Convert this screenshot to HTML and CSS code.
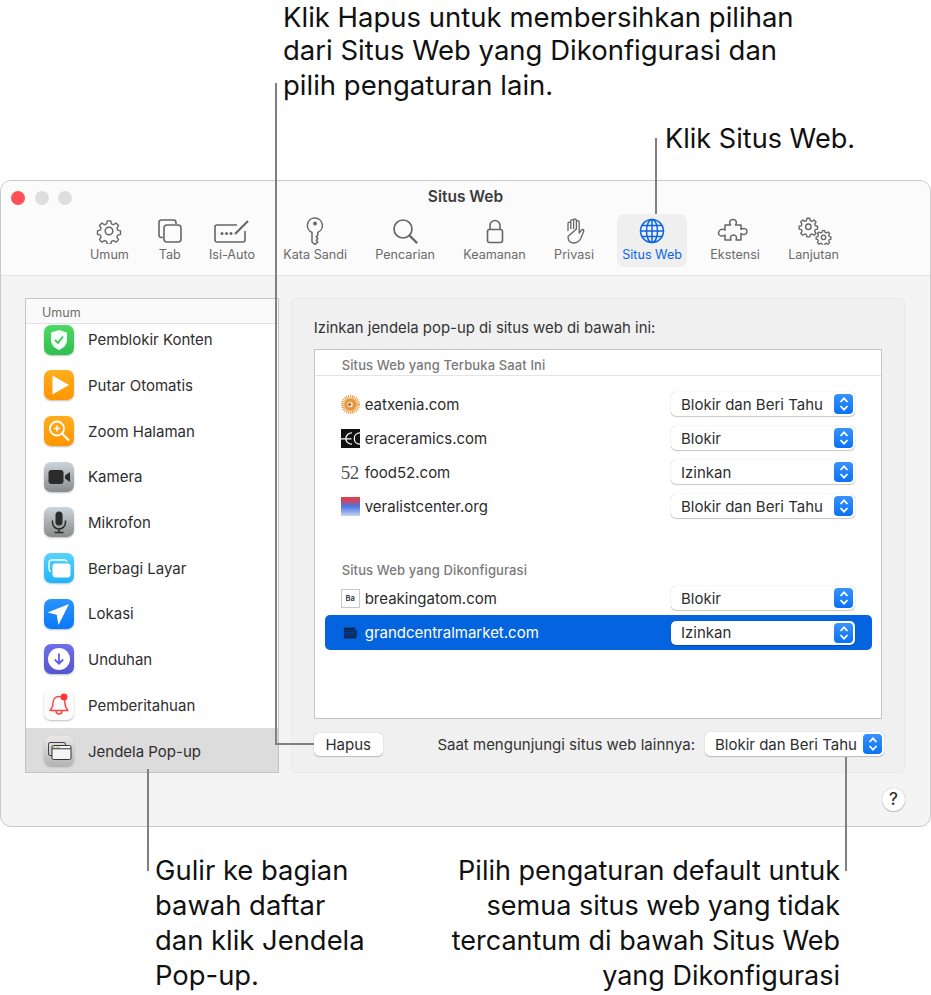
FILE: index.html
```html
<!DOCTYPE html>
<html lang="id">
<head>
<meta charset="utf-8">
<title>Situs Web</title>
<link rel="stylesheet" href="styles.css">
</head>
<body>
<div class="page">
  <header class="top">
    <p class="callout callout-hapus"><span>Klik Hapus untuk membersihkan pilihan</span><span>dari Situs Web yang Dikonfigurasi dan</span><span>pilih pengaturan lain.</span></p>
    <p class="callout callout-situs">Klik Situs Web.</p>
  </header>

  <main class="window">
    <div class="titlebar">
      <div class="lights"><span class="light red"></span><span class="light"></span><span class="light"></span></div>
      <div class="title">Situs Web</div>
    </div>
    <nav class="toolbar">
      <div class="tool">
        <svg viewBox="0 0 26 26" class="ticon"><g fill="none" stroke="#666" stroke-width="1.5" stroke-linejoin="round"><path d="M11 1.8h4l.7 3.2 2.3 1 2.8-1.8 2.8 2.8-1.8 2.8 1 2.3 3 .7v4l-3 .7-1 2.3 1.8 2.8-2.8 2.8-2.8-1.8-2.3 1-.7 3h-4l-.7-3-2.3-1-2.8 1.8-2.8-2.8 1.8-2.8-1-2.3-3-.7v-4l3-.7 1-2.3-1.8-2.8 2.8-2.8 2.8 1.8 2.3-1z" transform="translate(1.3 1.3) scale(.9)"/><circle cx="13" cy="13" r="3.8"/></g></svg>
        <span>Umum</span>
      </div>
      <div class="tool tool-tab">
        <svg viewBox="0 0 26 26" class="ticon"><g fill="none" stroke="#666" stroke-width="1.6"><path d="M6 19.5H4.5a2.5 2.5 0 0 1-2.5-2.500V4.500A2.500 2.500 0 0 1 4.500 2h12A2.500 2.500 0 0 1 19 4.500V6"/><rect x="7" y="7" width="17" height="17" rx="3"/></g></svg>
        <span>Tab</span>
      </div>
      <div class="tool">
        <svg viewBox="0 0 36 26" class="ticon wide"><g fill="none" stroke="#666" stroke-width="1.6"><path d="M23 7H3a2 2 0 0 0-2 2v13a2 2 0 0 0 2 2h26a2 2 0 0 0 2-2V13"/><path d="M21 16 34 3" stroke-width="2.200"/></g><g fill="#666"><circle cx="8" cy="15.500" r="1.500"/><circle cx="12.500" cy="15.500" r="1.500"/><circle cx="17" cy="15.500" r="1.500"/></g></svg>
        <span>Isi-Auto</span>
      </div>
      <div class="tool">
        <svg viewBox="0 0 26 28" class="ticon tall"><path d="M13 1a7.500 7.500 0 0 0-3 14.400V25l3 2.500 2.800-2.500-1.500-1.800 1.500-1.700-1.500-1.800 1.500-1.700v-2.600A7.500 7.500 0 0 0 13 1z" fill="none" stroke="#666" stroke-width="1.500" stroke-linejoin="round"/><circle cx="13" cy="6.500" r="1.900" fill="#666"/></svg>
        <span>Kata Sandi</span>
      </div>
      <div class="tool">
        <svg viewBox="0 0 26 26" class="ticon"><circle cx="11" cy="11" r="9" fill="none" stroke="#666" stroke-width="1.700"/><path d="m17.500 17.500 7 7" stroke="#666" stroke-width="2.400" stroke-linecap="round"/></svg>
        <span>Pencarian</span>
      </div>
      <div class="tool">
        <svg viewBox="0 0 26 26" class="ticon"><g fill="none" stroke="#666" stroke-width="1.600"><rect x="5.500" y="11.500" width="15" height="13" rx="2"/><path d="M8 11.500V7.500a5 5 0 0 1 10 0v4"/></g></svg>
        <span>Keamanan</span>
      </div>
      <div class="tool">
        <svg viewBox="0 0 26 26" class="ticon"><path d="M7 13V5.500a1.400 1.400 0 0 1 2.800 0V11m0 0V3a1.400 1.400 0 0 1 2.800 0v8m0 0V2.400a1.400 1.400 0 0 1 2.800 0V11m0 0V4a1.400 1.400 0 0 1 2.800 0v11l2.200-2.800c1.200-1.500 3-.3 2.200 1.200L20 20c-1.500 3-3.500 5-7 5-4 0-6-2.500-6-6.500z" fill="none" stroke="#666" stroke-width="1.300" stroke-linejoin="round"/></svg>
        <span>Privasi</span>
      </div>
      <div class="tool active">
        <svg viewBox="0 0 26 26" class="ticon"><g fill="none" stroke="#0a64e4" stroke-width="1.500"><circle cx="13" cy="13" r="11.500"/><ellipse cx="13" cy="13" rx="5.500" ry="11.500"/><path d="M13 1.500v23M1.500 13h23M3 7.500h20M3 18.500h20"/></g></svg>
        <span>Situs Web</span>
      </div>
      <div class="tool">
        <svg viewBox="0 0 36 26" class="ticon wide"><path d="M8 7h5.500c-2-3-.5-5.500 2.500-5.500S20.500 4 18.500 7H24v4.500c2.500-2 6-1 6 2s-3.500 4-6 2V22h-5c1.500-3.500-.5-5-2.500-5s-4 1.500-2.500 5H8v-5c-3 2-6.500 1-6.500-2S5 10 8 12z" fill="none" stroke="#666" stroke-width="1.500" stroke-linejoin="round"/></svg>
        <span>Ekstensi</span>
      </div>
      <div class="tool">
        <svg viewBox="0 0 36 28" class="ticon wide tall"><g fill="none" stroke="#666" stroke-linejoin="round"><g transform="translate(3 0) scale(.72)" stroke-width="1.900"><path d="M11 1.8h4l.7 3.2 2.3 1 2.8-1.800 2.800 2.800-1.800 2.800 1 2.300 3 .7v4l-3 .7-1 2.300 1.800 2.800-2.800 2.800-2.800-1.800-2.300 1-.7 3h-4l-.7-3-2.300-1-2.800 1.800-2.800-2.800 1.800-2.800-1-2.300-3-.7v-4l3-.7 1-2.300-1.800-2.800 2.800-2.800 2.800 1.800 2.300-1z"/><circle cx="13" cy="13.500" r="3.800"/></g><g transform="translate(20 12.500) scale(.58)" stroke-width="2.200"><path d="M11 1.8h4l.7 3.2 2.300 1 2.800-1.800 2.800 2.800-1.800 2.800 1 2.300 3 .7v4l-3 .7-1 2.300 1.800 2.800-2.800 2.800-2.800-1.800-2.300 1-.7 3h-4l-.7-3-2.300-1-2.800 1.800-2.800-2.800 1.800-2.800-1-2.300-3-.7v-4l3-.7 1-2.300-1.800-2.800 2.800-2.800 2.800 1.800 2.300-1z"/><circle cx="13" cy="13.500" r="3.800"/></g></g></svg>
        <span>Lanjutan</span>
      </div>
    </nav>

    <div class="content">
      <aside class="sidebar">
        <div class="side-head">Umum</div>
        <ul class="side-list">
          <li class="side-row first"><span class="app green"><svg viewBox="0 0 30 30"><path d="M15 5l8 2.500V15c0 5-3.500 8-8 10-4.500-2-8-5-8-10V7.500z" fill="#fff" opacity=".95"/><path d="m11 15 3 3 5-6.500" fill="none" stroke="#34c759" stroke-width="1.800"/></svg></span>Pemblokir Konten</li>
          <li class="side-row"><span class="app orange"><svg viewBox="0 0 30 30"><path d="M8.500 5.500 25 15 8.500 24.500z" fill="#fff"/></svg></span>Putar Otomatis</li>
          <li class="side-row"><span class="app orange"><svg viewBox="0 0 30 30"><g fill="none" stroke="#fff" stroke-width="1.800"><circle cx="13" cy="12.500" r="7"/><path d="m18 17.500 7 7" stroke-width="2.200"/><path d="M13 9.500v6M10 12.500h6" stroke-width="1.500"/></g></svg></span>Zoom Halaman</li>
          <li class="side-row"><span class="app grey"><svg viewBox="0 0 30 30"><rect x="4.500" y="8" width="15" height="14" rx="3" fill="#2b2b2b"/><path d="m21 13.500 5-3.500v10l-5-3.500z" fill="#2b2b2b"/></svg></span>Kamera</li>
          <li class="side-row"><span class="app grey"><svg viewBox="0 0 30 30"><rect x="11.500" y="4.500" width="7" height="14" rx="3.500" fill="#2b2b2b"/><path d="M8.500 13.500v2a6.500 6.500 0 0 0 13 0v-2M15 22v3.500M10.500 25.500h9" fill="none" stroke="#2b2b2b" stroke-width="1.500"/></svg></span>Mikrofon</li>
          <li class="side-row"><span class="app cyan"><svg viewBox="0 0 30 30"><path d="M7 18.500a2.500 2.500 0 0 1-2-2.500V9.500A2.500 2.500 0 0 1 7.500 7h13A2.500 2.500 0 0 1 23 9" fill="none" stroke="#fff" stroke-width="1.400"/><rect x="8.500" y="10.500" width="18" height="14" rx="3" fill="#fff"/></svg></span>Berbagi Layar</li>
          <li class="side-row"><span class="app blue"><svg viewBox="0 0 30 30"><path d="M25 5 14.500 26l-1.800-10.200L3.500 13.500z" fill="#fff"/></svg></span>Lokasi</li>
          <li class="side-row"><span class="app indigo"><svg viewBox="0 0 30 30"><circle cx="15" cy="15" r="11" fill="#fff"/><path d="M15 9.500v10M10.800 15.500l4.200 4.200 4.200-4.200" fill="none" stroke="#5c5ce0" stroke-width="1.800"/></svg></span>Unduhan</li>
          <li class="side-row"><span class="app white"><svg viewBox="0 0 30 30"><path d="M15 6.500c-4 0-6 3-6 6.500 0 4-1 5.500-3 7.500h18c-2-2-3-3.500-3-7.500 0-3.500-2-6.500-6-6.500zM12 21c0 4 6 4 6 0" fill="none" stroke="#f44" stroke-width="1.500" stroke-linejoin="round"/><circle cx="20" cy="7" r="3.500" fill="#f33"/></svg></span>Pemberitahuan</li>
          <li class="side-row selected"><span class="app silver"><svg viewBox="0 0 30 30"><rect x="4.500" y="6.500" width="17" height="13" rx="1.500" fill="none" stroke="#444" stroke-width="1"/><rect x="8" y="9.500" width="19" height="14" rx="1.500" fill="#f4f4f4" stroke="#333" stroke-width="1"/><path d="M8 12.800h19" stroke="#333" stroke-width="1"/><circle cx="10" cy="11.200" r=".7" fill="#e44"/><circle cx="12.200" cy="11.200" r=".7" fill="#ca3"/><circle cx="14.400" cy="11.200" r=".7" fill="#4a4"/></svg></span>Jendela Pop-up</li>
        </ul>
      </aside>

      <section class="panel">
        <p class="panel-title">Izinkan jendela pop-up di situs web di bawah ini:</p>
        <div class="table">
          <div class="table-head">Situs Web yang Terbuka Saat Ini</div>
          <div class="rows">
            <div class="row">
              <span class="fav"><svg viewBox="0 0 20 20"><circle cx="10" cy="10" r="8.200" fill="none" stroke="#e8963a" stroke-width="3.400" stroke-dasharray="1.100 .9"/><circle cx="10" cy="10" r="6.600" fill="#e8973c"/><circle cx="9.500" cy="10" r="3" fill="#f6e2c6"/><circle cx="9" cy="10" r="1.400" fill="#8a4a20"/></svg></span>
              <span class="host">eatxenia.com</span>
              <div class="select"><span>Blokir dan Beri Tahu</span><i class="stepper"><svg viewBox="0 0 10 16"><path d="m1.500 6 3.500-3.700L8.500 6M1.500 10 5 13.700 8.500 10" fill="none" stroke="#fff" stroke-width="1.700"/></svg></i></div>
            </div>
            <div class="row">
              <span class="fav"><svg viewBox="0 0 20 20"><rect width="20" height="20" fill="#111"/><path d="M0 10.500h4.500M11.500 4A6.500 6.500 0 0 0 5 10c0 3 2.500 6 6.500 6M5 10.500h6M20 4c-4 0-6 3-6 6s2 6 6 6" fill="none" stroke="#fff" stroke-width="1.300"/></svg></span>
              <span class="host">eraceramics.com</span>
              <div class="select"><span>Blokir</span><i class="stepper"><svg viewBox="0 0 10 16"><path d="m1.500 6 3.500-3.700L8.500 6M1.500 10 5 13.700 8.500 10" fill="none" stroke="#fff" stroke-width="1.700"/></svg></i></div>
            </div>
            <div class="row">
              <span class="fav fav-text">52</span>
              <span class="host">food52.com</span>
              <div class="select"><span>Izinkan</span><i class="stepper"><svg viewBox="0 0 10 16"><path d="m1.500 6 3.500-3.700L8.500 6M1.500 10 5 13.700 8.500 10" fill="none" stroke="#fff" stroke-width="1.700"/></svg></i></div>
            </div>
            <div class="row">
              <span class="fav fav-gradient"></span>
              <span class="host">veralistcenter.org</span>
              <div class="select"><span>Blokir dan Beri Tahu</span><i class="stepper"><svg viewBox="0 0 10 16"><path d="m1.500 6 3.500-3.700L8.500 6M1.500 10 5 13.700 8.500 10" fill="none" stroke="#fff" stroke-width="1.700"/></svg></i></div>
            </div>
          </div>
          <div class="table-head plain">Situs Web yang Dikonfigurasi</div>
          <div class="rows rows-config">
            <div class="row">
              <span class="fav fav-ba">Ba</span>
              <span class="host">breakingatom.com</span>
              <div class="select"><span>Blokir</span><i class="stepper"><svg viewBox="0 0 10 16"><path d="m1.500 6 3.500-3.700L8.500 6M1.500 10 5 13.700 8.500 10" fill="none" stroke="#fff" stroke-width="1.700"/></svg></i></div>
            </div>
            <div class="row current">
              <span class="fav"><svg viewBox="0 0 20 20"><path d="M3 6h12M3 9h14M3 12h14M3 15h13" stroke="#0a2a5c" stroke-width="2.600"/></svg></span>
              <span class="host">grandcentralmarket.com</span>
              <div class="select"><span>Izinkan</span><i class="stepper"><svg viewBox="0 0 10 16"><path d="m1.500 6 3.500-3.700L8.500 6M1.500 10 5 13.700 8.500 10" fill="none" stroke="#fff" stroke-width="1.700"/></svg></i></div>
            </div>
          </div>
        </div>
        <div class="panel-foot">
          <button class="btn" type="button">Hapus</button>
          <span class="foot-label">Saat mengunjungi situs web lainnya:</span>
          <div class="select select-foot"><span>Blokir dan Beri Tahu</span><i class="stepper"><svg viewBox="0 0 10 16"><path d="m1.500 6 3.500-3.700L8.500 6M1.500 10 5 13.700 8.500 10" fill="none" stroke="#fff" stroke-width="1.700"/></svg></i></div>
        </div>
      </section>
    </div>
    <div class="help-row"><span class="help">?</span></div>
  </main>

  <footer class="bottom">
    <p class="callout callout-gulir">Gulir ke bagian<br>bawah daftar<br>dan klik Jendela<br>Pop-up.</p>
    <p class="callout callout-pilih">Pilih pengaturan default untuk<br>semua situs web yang tidak<br>tercantum di bawah Situs Web<br>yang Dikonfigurasi</p>
  </footer>

  <span class="line l-hapus"></span>
  <span class="line l-hapus-h"></span>
  <span class="line l-situs"></span>
  <span class="line l-gulir"></span>
  <span class="line l-pilih"></span>
</div>
</body>
</html>
```
FILE: styles.css
```css
* { box-sizing: border-box; }
html, body { margin: 0; background: #fff; }
body { font-family: Inter, "Liberation Sans", sans-serif; color: #2c2c2c; }
.page { position: relative; width: 931px; height: 995px; overflow: hidden; }
p { margin: 0; }

.top { height: 180px; }
.callout { font-size: 27.400px; line-height: 35px; color: #111; }
.callout-hapus { display: flex; flex-direction: column; margin-left: 283px; font-size: 27.500px; line-height: 30px; }
.callout-hapus span:nth-child(1) { line-height: 34px; margin-bottom: 1px; }
.callout-hapus span:nth-child(2) { margin-bottom: 5px; }
.callout-situs { margin-left: 665px; margin-top: 21px; font-size: 27.100px; }

.window {
  width: 931px; height: 647px; background: #f4f4f4;
  border: 1px solid #c9c9c9; border-radius: 11px; overflow: hidden;
}
.titlebar { position: relative; height: 32px; background: #fbfbfb; }
.lights { display: flex; gap: 9.500px; padding: 10px 0 0 10px; }
.light { width: 14px; height: 14px; border-radius: 50%; background: #dedede; }
.light.red { background: #ff5257; }
.title { position: absolute; left: 0; right: 0; top: 6px; text-align: center; font-size: 15.500px; line-height: 20px; font-weight: 600; color: #3c3c3c; }

.toolbar {
  display: flex; gap: 19.300px; height: 63px; padding: 1px 0 0 84.500px;
  background: #fbfbfb; border-bottom: 1px solid #e4e4e4;
}
.tool {
  display: flex; flex-direction: column; align-items: center; height: 53px;
  padding: 4px 4.500px 0; border-radius: 7px; font-size: 12.600px; color: #6a6a6a; white-space: nowrap;
}
.tool-tab { padding-left: 4px; padding-right: 2.400px; }
.tool span { margin-top: 3px; line-height: 16px; }
.ticon { width: 26px; height: 26px; display: block; }
.ticon.wide { width: 36px; }
.ticon.tall { height: 28px; margin: -1px 0; }
.tool.active { background: #efefef; color: #0a64e4; padding-left: 5.500px; padding-right: 5.500px; margin: 0 -1px; }

.content { display: flex; gap: 12px; padding: 22px 25px 0 24px; }
.sidebar { width: 254px; height: 475px; background: #fff; border: 1px solid #c4c4c4; overflow: hidden; display: flex; flex-direction: column; }
.side-head { height: 25px; flex: none; padding: 6px 0 0 16px; font-size: 12.500px; line-height: 15px; color: #6d6d6d; background: #fafafa; border-bottom: 1px solid #e2e2e2; }
.side-list { list-style: none; margin: 0; padding: 0; overflow: hidden; flex: 1; }
.side-row { display: flex; align-items: center; gap: 14px; height: 45.670px; padding-left: 18px; font-size: 15px; color: #2e2e2e; }
.side-row.first { margin-top: -7px; }
.side-row.selected { background: #dcdcdc; height: 47px; }
.app { width: 30px; height: 30px; flex: none; border-radius: 7px; box-shadow: 0 1px 2px rgba(0,0,0,.25); overflow: hidden; }
.app svg { width: 30px; height: 30px; display: block; }
.green { background: linear-gradient(#4fd864, #2fbf50); }
.orange { background: linear-gradient(#ffae1f, #ff9500); }
.grey { background: linear-gradient(#cbd5dc, #8a8a8a); }
.cyan { background: linear-gradient(#5ad2fb, #1eb4f8); }
.blue { background: linear-gradient(#2a94fb, #0a78fa); }
.indigo { background: linear-gradient(#6f6fe6, #5555cf); }
.white { background: #fbfbfb; }
.silver { background: linear-gradient(#e8e8e8, #b4b4b4); }

.panel { width: 615px; height: 475px; background: #f0f0f0; border: 1px solid #e9e9e9; border-radius: 5px; padding: 0 22px; }
.panel-title { margin-top: 19px; font-size: 14.900px; line-height: 20px; color: #333; }
.table { height: 370px; margin-top: 11px; background: #fff; border: 1px solid #c4c4c4; }
.table-head { height: 26px; padding: 7px 0 0 27px; font-size: 13px; font-weight: 500; letter-spacing: .12px; line-height: 16px; color: #7a7a7a; border-bottom: 1px solid #e4e4e4; }
.table-head.plain { border-bottom: 0; height: 24px; margin-top: 34px; padding-top: 5px; }
.rows { padding: 11px 9px 0 10px; }
.rows-config { padding-top: 0; }
.row { display: flex; align-items: center; height: 34px; padding: 0 17px 0 16px; font-size: 15px; color: #2b2b2b; border-radius: 5px; }
.row.current { background: #0464e0; color: #fff; height: 35px; }
.fav { width: 19px; height: 19px; flex: none; margin-right: 5px; }
.fav svg { width: 19px; height: 19px; display: block; }
.fav-text { font-family: "Liberation Serif", serif; font-size: 19px; line-height: 19px; color: #555; letter-spacing: -.5px; }
.fav-gradient { background: linear-gradient(#d8414f 0, #d8414f 15%, #4a78e8 50%, #c8d4ee 100%); }
.fav-ba { border: 1px solid #c8c8c8; font-size: 7.500px; font-weight: 600; line-height: 17px; text-align: center; color: #234; }
.host { flex: 1; }
.select {
  display: flex; align-items: center; justify-content: space-between;
  width: 184px; height: 24px; padding: 0 2px 0 10px; background: #fff; border-radius: 5px;
  font-size: 15px; color: #2e2e2e; box-shadow: 0 0 1px rgba(0,0,0,.3), 0 1px 1px rgba(0,0,0,.2);
}
.stepper { display: flex; align-items: center; justify-content: center; width: 19px; height: 20px; background: linear-gradient(#3a92fb, #0a72f5); border-radius: 4px; }
.stepper svg { width: 10px; height: 16px; display: block; }

.panel-foot { display: flex; align-items: center; height: 24px; margin-top: 13px; }
.btn { width: 69px; height: 23px; padding: 0; border: 0; border-radius: 5px; background: #fff; font: inherit; font-size: 15px; color: #2e2e2e; box-shadow: 0 0 1px rgba(0,0,0,.3), 0 1px 1px rgba(0,0,0,.2); }
.foot-label { margin-left: auto; font-size: 15px; color: #333; }
.select-foot { width: 179px; margin-left: 10px; margin-right: -2px; }

.help-row { display: flex; justify-content: flex-end; padding: 15px 25px 0 0; }
.help { width: 23px; height: 23px; border-radius: 50%; background: #fff; box-shadow: 0 0 1px rgba(0,0,0,.35), 0 1px 1px rgba(0,0,0,.2); text-align: center; font-size: 17px; line-height: 23px; font-weight: 500; color: #333; }

.bottom { display: flex; justify-content: space-between; padding: 26px 91px 0 155px; }
.callout-pilih { text-align: right; font-size: 27px; }

.line { position: absolute; background: #808080; }
.l-hapus { left: 275px; top: 83px; width: 2px; height: 662px; }
.l-hapus-h { left: 275px; top: 743px; width: 39px; height: 2px; }
.l-situs { left: 655px; top: 138px; width: 2px; height: 76px; }
.l-gulir { left: 147px; top: 769px; width: 2px; height: 102px; }
.l-pilih { left: 845px; top: 757px; width: 2px; height: 114px; }
```
